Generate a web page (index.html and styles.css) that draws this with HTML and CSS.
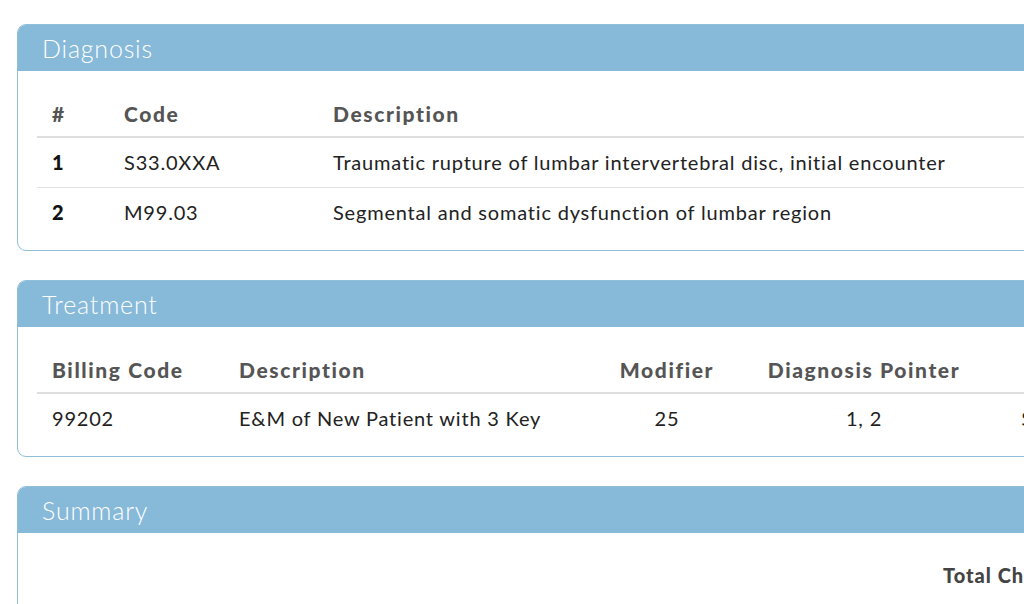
FILE: index.html
```html
<!DOCTYPE html>
<html>
<head>
  <title>Claim</title>
  <meta charset="utf-8">
  <link rel="stylesheet" href="styles.css">
</head>
<body>
  <div class="page">

    <div class="panel">
      <div class="panel-head">Diagnosis</div>
      <div class="panel-body">
        <table class="grid diag">
          <colgroup>
            <col style="width:72px">
            <col style="width:209px">
            <col>
          </colgroup>
          <thead>
            <tr><th>#</th><th>Code</th><th>Description</th></tr>
          </thead>
          <tbody>
            <tr><td class="num">1</td><td>S33.0XXA</td><td>Traumatic rupture of lumbar intervertebral disc, initial encounter</td></tr>
            <tr><td class="num">2</td><td>M99.03</td><td>Segmental and somatic dysfunction of lumbar region</td></tr>
          </tbody>
        </table>
      </div>
    </div>

    <div class="panel">
      <div class="panel-head">Treatment</div>
      <div class="panel-body">
        <table class="grid treat">
          <colgroup>
            <col style="width:187px">
            <col style="width:360px">
            <col style="width:166px">
            <col style="width:228px">
            <col>
          </colgroup>
          <thead>
            <tr><th>Billing Code</th><th>Description</th><th class="mid">Modifier</th><th class="mid">Diagnosis Pointer</th><th class="fee">Charge</th></tr>
          </thead>
          <tbody>
            <tr><td>99202</td><td>E&amp;M of New Patient with 3 Key</td><td class="mid">25</td><td class="mid">1, 2</td><td class="fee">$95.00</td></tr>
          </tbody>
        </table>
      </div>
    </div>

    <div class="panel">
      <div class="panel-head">Summary</div>
      <div class="panel-body summary">
        <div class="total"><span class="label">Total Charge</span><span class="amount">$95.00</span></div>
      </div>
    </div>

  </div>
</body>
</html>
```

FILE: styles.css
```css
*{
  padding:0;
  margin:0;
  box-sizing:border-box;
}
html,body{
  background:#fff;
  overflow:hidden;
}
body{
  font-family:"Lato","Liberation Sans",sans-serif;
  color:#222;
}
.page{
  width:1200px;
  padding:24px 0 0 17px;
}
.panel{
  border:1px solid #8fbfd9;
  border-radius:9px;
  overflow:hidden;
  margin-bottom:29px;
}
.panel-head{
  height:46px;
  line-height:46px;
  background:#87b9d9;
  color:#fff;
  font-size:25px;
  font-weight:300;
  letter-spacing:0.8px;
  padding-left:24px;
}
.panel-body{
  padding:20px 19px 13px;
}
.grid{
  width:100%;
  border-collapse:collapse;
  table-layout:fixed;
  font-size:20px;
  line-height:21px;
  letter-spacing:0.8px;
}
.grid th{
  text-align:left;
  font-size:21px;
  font-weight:900;
  color:#555;
  padding:12px 15px;
  border-bottom:2px solid #dedede;
  letter-spacing:1.6px;
  white-space:nowrap;
}
.grid td{
  padding:14px 15px;
  white-space:nowrap;
}
.grid tbody tr + tr td{
  border-top:1px solid #e3e3e3;
}
.grid .num{
  font-weight:900;
  color:#111;
}
.grid .mid{
  text-align:center;
}
.grid th.fee{
  padding-left:80px;
}
.grid td.fee{
  padding-left:43px;
}
.summary{
  height:110px;
}
.total{
  padding:10px 0 0 906px;
  font-size:20px;
  font-weight:900;
  letter-spacing:1px;
  color:#444;
}
.total .amount{
  margin-left:30px;
}
```
